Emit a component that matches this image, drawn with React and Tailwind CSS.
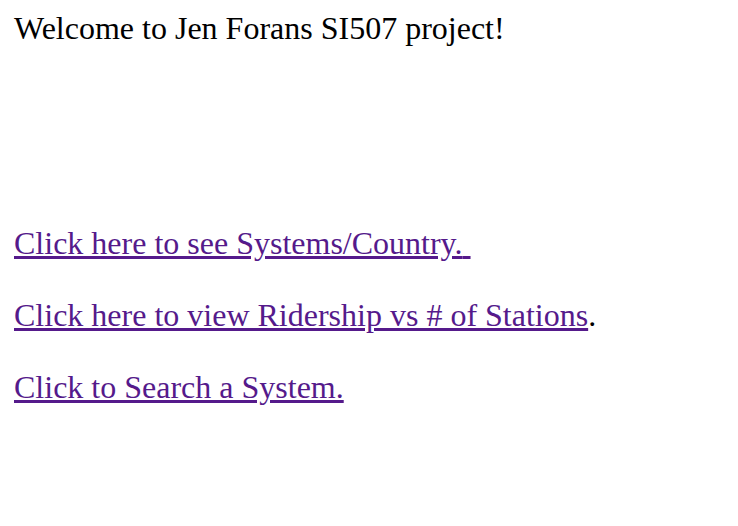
export default function App() {
  return (
    <div className="bg-white min-h-[526px] px-[14px] pt-[8px] text-black text-[32px] leading-[40px]" style={{ fontFamily: '"Liberation Serif", "Times New Roman", serif' }}>
      <p>Welcome to Jen Forans SI507 project!</p>
      <p className="mt-[175px]"><a href="#" className="text-[#551a8b] underline">Click here to see Systems/Country.{"\u00a0"}</a></p>
      <p className="mt-[32px]"><a href="#" className="text-[#551a8b] underline">Click here to view Ridership vs # of Stations</a>.</p>
      <p className="mt-[32px]"><a href="#" className="text-[#551a8b] underline">Click to Search a System.</a></p>
    </div>
  );
}
